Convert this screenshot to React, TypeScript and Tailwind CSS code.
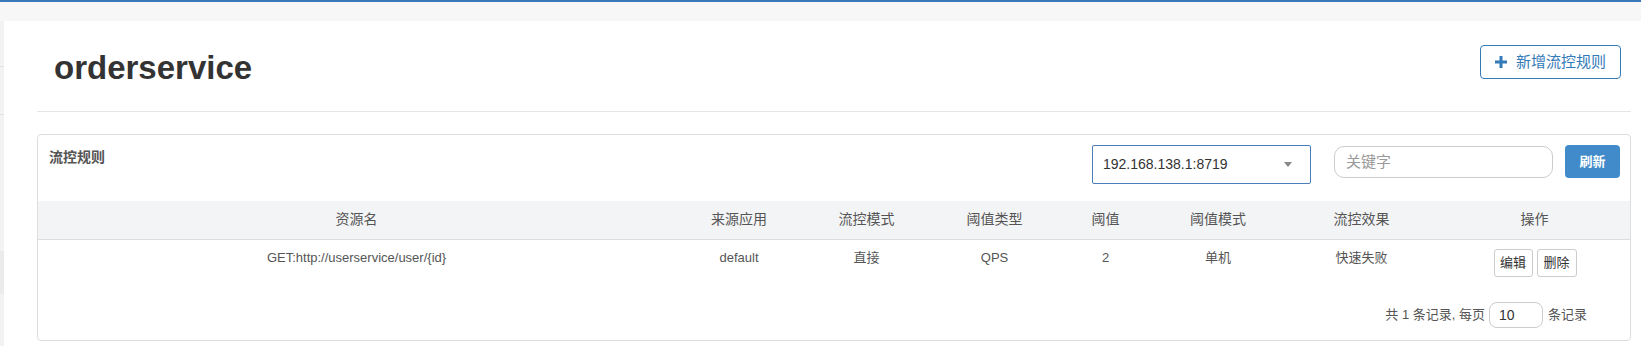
import React from "react";

const FONT = { fontFamily: '"Liberation Sans", Arial, "Noto Sans CJK SC", sans-serif' };

const COLS = [
  { label: "资源名", w: "w-[637px]" },
  { label: "来源应用", w: "w-[128px]" },
  { label: "流控模式", w: "w-[127px]" },
  { label: "阈值类型", w: "w-[129px]" },
  { label: "阈值", w: "w-[93px]" },
  { label: "阈值模式", w: "w-[132px]" },
  { label: "流控效果", w: "w-[155px]" },
  { label: "操作", w: "w-[191px]" },
];

const ROW = ["GET:http://userservice/user/{id}", "default", "直接", "QPS", "2", "单机", "快速失败"];

function PlusIcon() {
  return (
    <svg width="12" height="12" viewBox="0 0 12 12" className="shrink-0">
      <rect x="4.5" y="0" width="3" height="12" fill="#337ab7" />
      <rect x="0" y="4.5" width="12" height="3" fill="#337ab7" />
    </svg>
  );
}

export default function App() {
  return (
    <div className="w-full h-[346px] overflow-hidden bg-[#f7f7f7] border-t-2 border-[#3a78b9]" style={FONT}>
      <div className="flex h-full pt-[19px]">
        {/* sidebar edge */}
        <div className="w-[4px] flex flex-col bg-[#f3f3f3]">
          <div className="h-[46px] border-b border-[#e2e2e2]" />
          <div className="h-[48px] border-b border-[#e2e2e2]" />
          <div className="h-[136px]" />
          <div className="h-[43px] bg-[#ebebeb]" />
        </div>

        {/* content */}
        <div className="flex-1 bg-white pl-[33px] pr-[10px]">
          {/* page header */}
          <div className="flex items-start justify-between h-[91px] border-b border-[#e5e5e5]">
            <h1 className="mt-[27px] ml-[17px] h-[40px] leading-[40px] text-[33px] font-bold text-[#333]">orderservice</h1>
            <button className="mt-[24px] mr-[10px] h-[34px] w-[141px] flex items-center justify-center gap-[9px] border border-[#337ab7] rounded-[4px] text-[15px] text-[#337ab7] bg-white">
              <PlusIcon />
              <span>新增流控规则</span>
            </button>
          </div>

          {/* rules panel */}
          <div className="mt-[22px] border border-[#dddddd] rounded-[4px] h-[207px]">
            <div className="flex items-start h-[66px] pt-[10px] pl-[11px] pr-[10px]">
              <div className="mt-[2px] leading-[20px] text-[14px] font-bold text-[#555]">流控规则</div>
              <div className="ml-auto flex items-start">
                <div className="relative w-[219px] h-[39px] border border-[#4a7ebb] rounded-[2px] flex items-center pl-[10px] text-[14px] text-[#333]">
                  192.168.138.1:8719
                  <span className="absolute right-[18px] top-[16px] w-0 h-0 border-x-[4px] border-x-transparent border-t-[5px] border-t-[#888]" />
                </div>
                <div className="ml-[23px] mt-[1px] w-[219px] h-[32px] border border-[#cccccc] rounded-[10px] flex items-center pl-[11px] text-[15px] text-[#999]">
                  关键字
                </div>
                <button className="ml-[12px] w-[55px] h-[33px] rounded-[4px] bg-[#428bca] text-white text-[13px] font-bold">刷新</button>
              </div>
            </div>

            <table className="w-full table-fixed border-collapse">
              <thead>
                <tr className="bg-[#f3f4f6] border-b border-[#dddddd]">
                  {COLS.map((c) => (
                    <th key={c.label} className={`${c.w} h-[38px] p-0 text-center font-normal text-[14px] text-[#555]`}>
                      {c.label}
                    </th>
                  ))}
                </tr>
              </thead>
              <tbody>
                <tr className="h-[48px]">
                  {ROW.map((v, i) => (
                    <td key={i} className="align-top pt-[8px] text-center text-[13px] leading-[20px] text-[#555]">
                      {v}
                    </td>
                  ))}
                  <td className="align-top pt-[9px]">
                    <div className="flex justify-center gap-[4px] pl-[1px]">
                      <button className="w-[39px] h-[28px] border border-[#cccccc] rounded-[3px] bg-white text-[13px] text-[#333]">编辑</button>
                      <button className="w-[40px] h-[28px] border border-[#cccccc] rounded-[3px] bg-white text-[13px] text-[#333]">删除</button>
                    </div>
                  </td>
                </tr>
              </tbody>
            </table>

            {/* pager */}
            <div className="mt-[15px] flex justify-end items-center pr-[43px] text-[13px] text-[#555]">
              <span>共 1 条记录, 每页</span>
              <div className="ml-[4px] w-[54px] h-[26px] border border-[#cccccc] rounded-[8px] flex items-center pl-[9px] text-[14px] text-[#333]">10</div>
              <span className="ml-[5px]">条记录</span>
            </div>
          </div>
        </div>
      </div>
    </div>
  );
}
